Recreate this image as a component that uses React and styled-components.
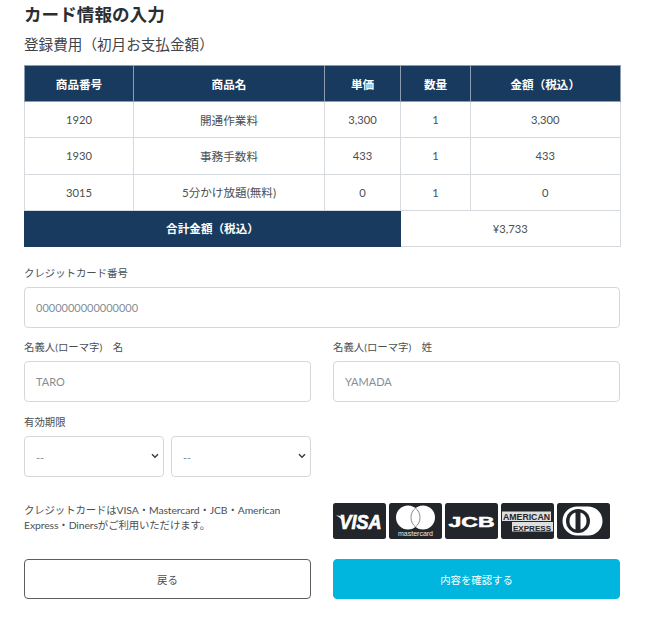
import React from "react"
import styled, { createGlobalStyle } from "styled-components"

const GlobalStyle = createGlobalStyle`
  html, body {
    margin: 0;
    background: #fff;
  }
  body {
    font-family: Lato, "Noto Sans CJK JP", sans-serif;
    color: #4a4f54;
  }
`

const Page = styled.div`
  width: 596px;
  padding: 4px 28px 24px 24px;
`

const Title = styled.h1`
  margin: 0;
  font-size: 17.6px;
  line-height: 22px;
  font-weight: 700;
  color: #2b2e33;
`

const Subtitle = styled.h2`
  margin: 8px 0 0;
  font-size: 14.6px;
  line-height: 22px;
  font-weight: 400;
  color: #3f4449;
`

const FeeTable = styled.table`
  width: 595.5px;
  margin-top: 9px;
  border-collapse: collapse;
  table-layout: fixed;
  font-size: 11.6px;
`

const HeadCell = styled.th`
  height: 35px;
  padding: 0;
  background: #173a5e;
  border: 1px solid #8d9db0;
  color: #fff;
  font-weight: 700;
  text-align: center;
`

const TotalHead = styled(HeadCell)`
  border-color: #173a5e;
`

const Cell = styled.td`
  height: ${({ $first }) => ($first ? "35.6px" : "35.25px")};
  padding: 0;
  border: 1px solid #d6d9de;
  text-align: center;
  color: #4a4f54;
  font-size: ${({ $numeric }) => ($numeric ? "11.2px" : "inherit")};
`

const FieldLabel = styled.label`
  display: block;
  margin-bottom: 7px;
  font-size: 10.4px;
  line-height: 14px;
  color: #4a4f54;
`

const CardField = styled.div`
  margin-top: 19px;
`

const NameGrid = styled.div`
  display: grid;
  grid-template-columns: 287px 287px;
  column-gap: 22px;
  margin-top: 12px;
`

const TextInput = styled.input`
  display: block;
  box-sizing: border-box;
  width: 100%;
  height: 41px;
  padding: 0 11px;
  border: 1px solid #d4d7dc;
  border-radius: 4px;
  background: #fff;
  font: inherit;
  font-size: 11px;
  color: #4a4f54;

  &::placeholder {
    color: #868e96;
    opacity: 1;
  }
`

const ExpiryField = styled.div`
  width: 287px;
  margin-top: 13px;
`

const ExpiryRow = styled.div`
  display: flex;
  gap: 7px;
`

const SelectWrap = styled.div`
  position: relative;
  width: 140px;
  height: 41px;
`

const ExpirySelect = styled.select`
  appearance: none;
  display: block;
  box-sizing: border-box;
  width: 100%;
  height: 100%;
  padding: 2px 11px 0;
  border: 1px solid #d4d7dc;
  border-radius: 4px;
  background: #fff;
  font: inherit;
  font-size: 11px;
  color: #868e96;
`

const SelectArrow = styled.svg`
  position: absolute;
  top: 17px;
  right: 5px;
  width: 8px;
  height: 6px;
  pointer-events: none;
`

const InfoGrid = styled.div`
  display: grid;
  grid-template-columns: 287px 287px;
  column-gap: 22px;
  margin-top: 26px;
`

const Note = styled.p`
  margin: 0;
  font-size: 10.4px;
  line-height: 15px;
  letter-spacing: -0.1px;
  color: #4a4f54;
`

const CardLogos = styled.div`
  display: flex;
  gap: 3px;
`

const LogoTile = styled.svg`
  display: block;
  width: 53px;
  height: 36px;
`

const ButtonGrid = styled.div`
  display: grid;
  grid-template-columns: 287px 287px;
  column-gap: 22px;
  margin-top: 20px;
`

const ActionButton = styled.button`
  height: 40px;
  padding: 0;
  border-radius: 4px;
  border: 1px solid ${({ $primary }) => ($primary ? "#00b5de" : "#5a5f64")};
  background: ${({ $primary }) => ($primary ? "#00b5de" : "#fff")};
  color: ${({ $primary }) => ($primary ? "#fff" : "#4a4f54")};
  font: inherit;
  font-size: 10.4px;
`

const rows = [
  { id: "1920", name: "開通作業料", price: "3,300", qty: "1", amount: "3,300" },
  { id: "1930", name: "事務手数料", price: "433", qty: "1", amount: "433" },
  { id: "3015", name: "5分かけ放題(無料)", price: "0", qty: "1", amount: "0" },
]

const Tile = ({ children, label }) => (
  <LogoTile viewBox="0 0 53 36" role="img" aria-label={label}>
    <rect width="53" height="36" rx="2.5" fill="#22262a" />
    {children}
  </LogoTile>
)

const MonthSelect = () => (
  <SelectWrap>
    <ExpirySelect defaultValue="">
      <option value="">--</option>
    </ExpirySelect>
    <SelectArrow viewBox="0 0 8 6">
      <path d="M1 1.2l3 3 3-3" fill="none" stroke="#3a3f44" strokeWidth="1.5" />
    </SelectArrow>
  </SelectWrap>
)

const App = () => {
  return (
    <Page>
      <GlobalStyle />
      <Title>カード情報の入力</Title>
      <Subtitle>登録費用（初月お支払金額）</Subtitle>

      <FeeTable>
        <colgroup>
          <col width="109" />
          <col width="191" />
          <col width="76" />
          <col width="70" />
          <col width="149.5" />
        </colgroup>
        <thead>
          <tr>
            <HeadCell>商品番号</HeadCell>
            <HeadCell>商品名</HeadCell>
            <HeadCell>単価</HeadCell>
            <HeadCell>数量</HeadCell>
            <HeadCell>金額（税込）</HeadCell>
          </tr>
        </thead>
        <tbody>
          {rows.map(row => (
            <tr key={row.id}>
              <Cell $numeric>{row.id}</Cell>
              <Cell>{row.name}</Cell>
              <Cell $numeric>{row.price}</Cell>
              <Cell $numeric>{row.qty}</Cell>
              <Cell $numeric>{row.amount}</Cell>
            </tr>
          ))}
          <tr>
            <TotalHead colSpan={3}>合計金額（税込）</TotalHead>
            <Cell $numeric colSpan={2}>¥3,733</Cell>
          </tr>
        </tbody>
      </FeeTable>

      <CardField>
        <FieldLabel>クレジットカード番号</FieldLabel>
        <TextInput placeholder="0000000000000000" />
      </CardField>

      <NameGrid>
        <div>
          <FieldLabel>名義人(ローマ字)　名</FieldLabel>
          <TextInput placeholder="TARO" />
        </div>
        <div>
          <FieldLabel>名義人(ローマ字)　姓</FieldLabel>
          <TextInput placeholder="YAMADA" />
        </div>
      </NameGrid>

      <ExpiryField>
        <FieldLabel>有効期限</FieldLabel>
        <ExpiryRow>
          <MonthSelect />
          <MonthSelect />
        </ExpiryRow>
      </ExpiryField>

      <InfoGrid>
        <Note>
          クレジットカードはVISA・Mastercard・JCB・American Express・Dinersがご利用いただけます。
        </Note>
        <CardLogos>
          <Tile label="VISA">
            <path d="M3 12.5c3-.4 5.5.6 7 3.5l-.5 2.5c-1-2.6-3.4-5-6.5-6z" fill="#fff" />
            <text x="27.5" y="25.5" textAnchor="middle" fill="#fff" stroke="#fff" strokeWidth="0.7" fontFamily="Liberation Sans" fontSize="20" fontWeight="700" fontStyle="italic" textLength="42" lengthAdjust="spacingAndGlyphs">VISA</text>
          </Tile>
          <Tile label="Mastercard">
            <circle cx="19" cy="14.5" r="12" fill="#fff" />
            <circle cx="34" cy="14.5" r="12" fill="#fff" />
            <path d="M26.5 5.1a12 12 0 0 1 0 18.8a12 12 0 0 1 0-18.8z" fill="#fff" stroke="#555a5e" strokeWidth="0.7" />
            <text x="26.5" y="32.5" textAnchor="middle" fill="#e8e8e8" fontFamily="Liberation Sans" fontSize="6.4" textLength="35" lengthAdjust="spacingAndGlyphs">mastercard</text>
          </Tile>
          <Tile label="JCB">
            <text x="26.5" y="24" textAnchor="middle" fill="#fff" stroke="#fff" strokeWidth="0.5" fontFamily="Liberation Sans" fontSize="14.5" fontWeight="700" textLength="46" lengthAdjust="spacingAndGlyphs">JCB</text>
          </Tile>
          <Tile label="American Express">
            <rect x="1" y="8.5" width="49" height="9.5" fill="#fff" opacity="0.85" />
            <text x="25.5" y="17" textAnchor="middle" fill="#22262a" fontFamily="Liberation Sans" fontSize="8.8" fontWeight="700" textLength="47" lengthAdjust="spacingAndGlyphs">AMERICAN</text>
            <rect x="11" y="19" width="41" height="9.5" fill="#fff" opacity="0.85" />
            <text x="31" y="27.5" textAnchor="middle" fill="#22262a" fontFamily="Liberation Sans" fontSize="8" fontWeight="700" textLength="38" lengthAdjust="spacingAndGlyphs">EXPRESS</text>
          </Tile>
          <Tile label="Diners">
            <path d="M20 3.5h11a14.5 14.5 0 0 1 0 29h-11a14.5 14.5 0 0 1 0-29z" fill="#fff" />
            <circle cx="21" cy="18" r="12" fill="#22262a" />
            <path d="M18.5 9.5v17a9 9 0 0 1 0-17zM23.5 9.5a9 9 0 0 1 0 17z" fill="#fff" />
          </Tile>
        </CardLogos>
      </InfoGrid>

      <ButtonGrid>
        <ActionButton>戻る</ActionButton>
        <ActionButton $primary>内容を確認する</ActionButton>
      </ButtonGrid>
    </Page>
  )
}

export default App
